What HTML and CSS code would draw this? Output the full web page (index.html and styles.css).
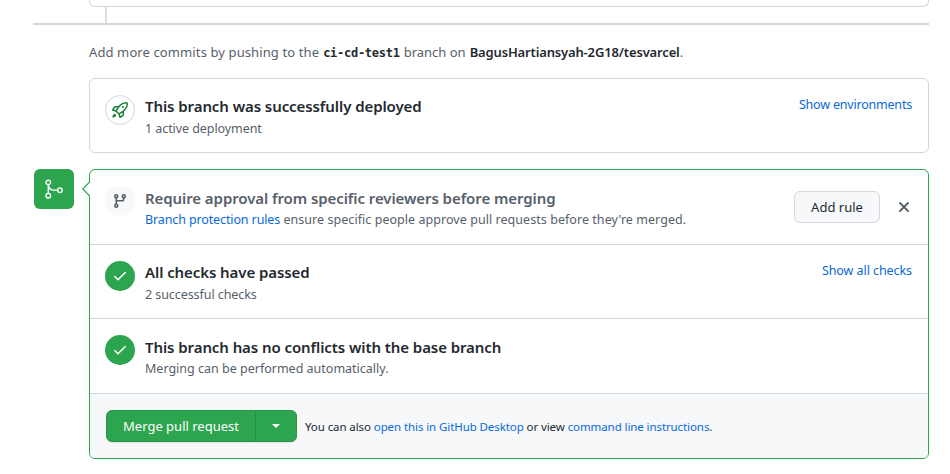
FILE: index.html
```html
<!DOCTYPE html>
<html lang="en">
<head>
<meta charset="utf-8">
<title>Pull request</title>
<link rel="stylesheet" href="styles.css">
</head>
<body>
<main class="page">
  <div class="previous"></div>
  <div class="connector"></div>
  <div class="rule"></div>
  <p class="hint"><span class="t-hint">Add more commits by pushing to the</span> <code>ci-cd-test1</code> <span class="t-branch">branch on</span> <span class="repo"><b>BagusHartiansyah-2G18/tesvarcel</b>.</span></p>
  <section class="box deployed">
    <span class="circle outlined"><svg width="16" height="16" viewBox="0 0 16 16" fill="#1a7f37"><path fill-rule="evenodd" d="M14.064 0a8.75 8.75 0 00-6.187 2.563l-.459.458c-.314.314-.616.641-.904.979H3.31a1.75 1.75 0 00-1.49.833L.11 7.607a.75.75 0 00.418 1.11l3.102.954c.037.051.079.1.124.145l2.429 2.428c.046.046.094.088.145.125l.954 3.102a.75.75 0 001.11.418l2.774-1.707a1.75 1.75 0 00.833-1.49V9.485c.338-.288.665-.59.979-.904l.458-.459A8.75 8.75 0 0016 1.936V1.75A1.75 1.75 0 0014.25 0h-.186zM10.5 10.625c-.088.06-.177.118-.266.175l-2.35 1.521.548 1.783 1.949-1.2a.25.25 0 00.119-.213v-2.066zM3.678 8.116L5.2 5.766c.058-.09.117-.178.176-.266H3.309a.25.25 0 00-.213.119l-1.2 1.95 1.782.547zm5.26-4.493A7.25 7.25 0 0114.063 1.5h.186a.25.25 0 01.25.25v.186a7.25 7.25 0 01-2.123 5.127l-.459.458a15.21 15.21 0 01-2.499 2.02l-2.317 1.5-2.143-2.143 1.5-2.317a15.25 15.25 0 012.02-2.5l.458-.458h.002zM12 5a1 1 0 11-2 0 1 1 0 012 0zm-8.44 9.56a1.5 1.5 0 10-2.12-2.12c-.734.73-1.047 2.332-1.15 3.003a.23.23 0 00.265.265c.671-.103 2.273-.416 3.005-1.148z"/></svg></span>
    <div class="text raised"><h3><span class="t-deployed">This branch was successfully deployed</span></h3><p><span class="t-active">1 active deployment</span></p></div>
    <a class="side"><span class="t-env">Show environments</span></a>
  </section>
  <div class="merge">
    <span class="badge"><svg width="24" height="24" viewBox="0 0 24 24" fill="none" stroke="#fff" stroke-width="1.5"><circle cx="5.75" cy="4.75" r="2.5"/><circle cx="5.75" cy="19.25" r="2.5"/><circle cx="18.5" cy="13.25" r="2.5"/><path d="M5.75 7.25v9.5M5.75 7.5c.5 3.7 3 5.75 6.5 5.75H16"/></svg></span>
    <section class="box panel">
      <svg class="arrow" width="9" height="16" viewBox="0 0 9 16"><path d="M9 1h-.5L1.8 8l6.7 7H9z" fill="#fff"/><path d="M8.5 0v1.2L1.8 8l6.7 6.8V16" fill="none" stroke="#2da44e" stroke-width="1.2"/></svg>
      <div class="row">
        <span class="circle muted"><svg width="16" height="16" viewBox="0 0 16 16" fill="none" stroke="#57606a" stroke-width="1.6"><circle cx="4.25" cy="3.25" r="1.5"/><circle cx="4.25" cy="12.75" r="1.5"/><circle cx="11.75" cy="3.25" r="1.5"/><path d="M4.25 4.75v6.5M11.75 4.75V6c0 1-.75 1.75-1.75 1.75H4.25"/></svg></span>
        <div class="text"><h3 class="gray"><span class="t-require">Require approval from specific reviewers before merging</span></h3><p><a class="t-rules">Branch protection rules</a> <span class="t-ensure">ensure specific people approve pull requests before they're merged.</span></p></div>
        <button class="add"><span class="t-add">Add rule</span></button>
        <svg class="close" width="16" height="16" viewBox="0 0 16 16" stroke="#57606a" stroke-width="1.9" stroke-linecap="round"><path d="M4 4l8 8M12 4l-8 8"/></svg>
      </div>
      <div class="row">
        <span class="circle green"><svg width="16" height="16" viewBox="0 0 16 16" fill="none" stroke="#fff" stroke-width="1.5" stroke-linecap="round" stroke-linejoin="round"><path d="M2.75 8.5L6 11.75l7.25-7.25"/></svg></span>
        <div class="text raised"><h3><span class="t-checks">All checks have passed</span></h3><p><span class="t-two">2 successful checks</span></p></div>
        <a class="side"><span class="t-show">Show all checks</span></a>
      </div>
      <div class="row last">
        <span class="circle green"><svg width="16" height="16" viewBox="0 0 16 16" fill="none" stroke="#fff" stroke-width="1.5" stroke-linecap="round" stroke-linejoin="round"><path d="M2.75 8.5L6 11.75l7.25-7.25"/></svg></span>
        <div class="text"><h3><span class="t-conflicts">This branch has no conflicts with the base branch</span></h3><p><span class="t-merging">Merging can be performed automatically.</span></p></div>
      </div>
      <footer>
        <div class="group"><button class="go"><span class="t-merge">Merge pull request</span></button><button class="drop" aria-label="Options"><i></i></button></div>
        <p class="also"><span class="t-also">You can also <a>open this in GitHub Desktop</a> or view <a>command line instructions</a>.</span></p>
      </footer>
    </section>
  </div>
</main>
</body>
</html>
```
FILE: styles.css
```css
* { box-sizing: border-box; }
body { margin: 0; background: #fff; color: #24292f; font-family: "Noto Sans", "Open Sans", sans-serif; font-size: 13px; overflow: hidden; }
h3, p { margin: 0; white-space: nowrap; }
a { color: #0969da; }
button { font: inherit; padding: 0; }
svg { display: block; flex: none; }
.page { width: 929px; height: 474px; }
.previous { height: 7px; margin-left: 89px; border: 1px solid #d0d7de; border-top: 0; border-radius: 0 0 6px 6px; }
.connector { width: 2px; height: 16px; margin-left: 105px; background: #d8dee4; }
.rule { height: 2px; margin-left: 33px; background: #d0d7de; }
.hint { display: flex; gap: 4px; height: 20px; line-height: 20px; margin: 17px 0 16px 89px; color: #57606a; }
.t-hint { letter-spacing: .11px; }
.hint code { font: bold 12px/22px "DejaVu Sans Mono", monospace; letter-spacing: -.27px; color: #24292f; }
.hint b { font-weight: 600; letter-spacing: -.15px; color: #24292f; }
.box { position: relative; border: 1px solid #d0d7de; border-radius: 6px; background: #fff; }
.deployed { display: flex; height: 75px; margin-left: 89px; padding: 16px 16px 0 15px; }
.circle { display: flex; flex: none; align-items: center; justify-content: center; width: 30px; height: 30px; border-radius: 50%; }
.outlined { border: 1px solid #d0d7de; }
.muted { background: #f6f8fa; }
.green { background: #2da44e; }
.text { flex: 1; margin-left: 10px; }
.text h3 { font-size: 15px; font-weight: 600; line-height: 24px; letter-spacing: -.08px; }
.text h3.gray { color: #57606a; }
.text p { font-size: 12.5px; line-height: 20px; color: #57606a; }
.side { font-size: 12.5px; line-height: 20px; white-space: nowrap; }
.raised { margin-top: -1px; }
.raised p { margin-top: 1px; }
.t-active, .t-two, .t-show { letter-spacing: -.07px; }
.t-env { letter-spacing: -.2px; }
.t-rules { letter-spacing: -.12px; }
.t-ensure { letter-spacing: .05px; }
.merge { display: flex; margin: 16px 0 0 34px; }
.badge { display: flex; flex: none; align-items: center; justify-content: center; width: 40px; height: 40px; margin-right: 15px; border-radius: 6px; background: #2da44e; }
.badge svg { width: 22px; height: 22px; }
.panel { flex: 1; height: 290px; border-color: #2da44e; }
.arrow { position: absolute; left: -9px; top: 11px; }
.row { display: flex; height: 75px; padding: 16px 16px 0 15px; border-bottom: 1px solid #d0d7de; }
.row + .row { height: 74px; }
.row + .row.last { height: 75px; }
.add { width: 86px; height: 32px; margin-top: 5px; border: 1px solid #d5d9dd; border-radius: 6px; background: #f6f8fa; color: #24292f; }
.close { margin: 13px 0 0 16px; }
footer { display: flex; align-items: center; height: 64px; padding: 0 16px; background: #f6f8fa; border-radius: 0 0 5px 5px; }
.group { display: flex; width: 191px; height: 32px; border: 1px solid #2a964a; border-radius: 6px; background: #2da44e; box-shadow: 0 1px 0 #1b1f2419; }
.group button { border: 0; background: transparent; color: #fff; }
.go { width: 148px; white-space: nowrap; }
.group .drop { flex: 1; display: flex; align-items: center; justify-content: center; border-left: 1px solid #278e45; }
.drop i { border: 4px solid transparent; border-top-color: #fff; border-bottom: 0; }
.also { margin-left: 8px; font-size: 11.5px; letter-spacing: -.09px; }
```
